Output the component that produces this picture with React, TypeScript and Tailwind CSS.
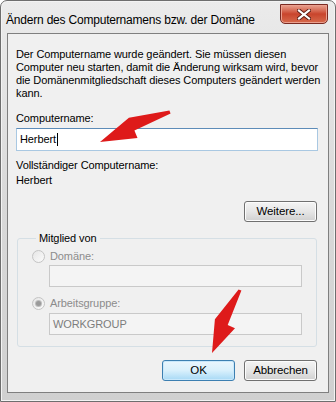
import React from 'react'

const font = { fontFamily: '"Liberation Sans", Arial, sans-serif' }

function Radio({ checked }: { checked?: boolean }) {
  return (
    <span className="relative flex h-[13px] w-[13px] shrink-0 items-center justify-center rounded-full border border-[#c4c4c4] bg-gradient-to-br from-[#e6e6e6] to-[#fbfbfb]">
      {checked && <span className="h-[5px] w-[5px] rounded-full bg-[#9a9a9a] ring-1 ring-[#bdbdbd]" />}
    </span>
  )
}

function Button({ label, primary }: { label: string; primary?: boolean }) {
  return (
    <button
      className={
        'flex h-[21px] w-[73px] items-center justify-center rounded-[3px] border text-[11.5px] tracking-[-0.1px] text-black ' +
        (primary
          ? 'border-[#3c7fb1] bg-gradient-to-b from-[#eaf6fd] via-[#d9f0fc] to-[#a7d9f5] shadow-[inset_0_0_0_1px_#c9e8fb]'
          : 'border-[#707070] bg-gradient-to-b from-[#f4f4f4] via-[#e6e6e6] to-[#d0d0d0] shadow-[inset_0_0_0_1px_#fcfcfc]')
      }
    >
      {label}
    </button>
  )
}

export default function App() {
  return (
    <div className="relative h-[402px] w-[336px] overflow-hidden bg-white" style={font}>
      {/* window frame */}
      <div className="flex h-[402px] w-[336px] flex-col rounded-t-[7px] border border-[#6e6e6e] bg-gradient-to-b from-[#ebebeb] via-[#d9d9d9] to-[#d0d0d0] shadow-[inset_0_0_0_1px_#f3f3f3]">
        {/* title bar */}
        <div className="flex h-[32px] shrink-0 items-start justify-between pl-[5px] pr-[7px]">
          <span className="mt-[11px] whitespace-nowrap text-[12px] leading-[16px] tracking-[-0.2px] text-black">
            Ändern des Computernamens bzw. der Domäne
          </span>
          <div className="mt-[3px] flex h-[20px] w-[48px] items-center justify-center rounded-b-[5px] border border-[#7a2a22] bg-gradient-to-b from-[#e8a291] via-[#c9442c] to-[#d66a4c] shadow-[inset_0_0_0_1px_#eba08f]">
            <svg width="14" height="11" viewBox="0 0 14 11">
              <path d="M2 1.5 L12 9.5 M12 1.5 L2 9.5" stroke="#5b1c14" strokeWidth="4" strokeLinecap="square" />
              <path d="M2 1.5 L12 9.5 M12 1.5 L2 9.5" stroke="#ffffff" strokeWidth="2.2" strokeLinecap="square" />
            </svg>
          </div>
        </div>

        {/* client area */}
        <div className="mx-[6px] mb-[8px] flex flex-1 flex-col border border-[#7f7f7f] bg-[#f0f0f0] pl-[8px] pr-[10px] pt-[14px] text-[11px] leading-[13px] tracking-[-0.1px] text-black">
          <p className="whitespace-nowrap">
            Der Computername wurde geändert. Sie müssen diesen
            <br />
            Computer neu starten, damit die Änderung wirksam wird, bevor
            <br />
            die Domänenmitgliedschaft dieses Computers geändert werden
            <br />
            kann.
          </p>

          <div className="mt-[12px]">Computername:</div>
          <div className="mt-[3px] flex h-[23px] items-center border border-[#a9c8e2] border-t-[#5d8cb8] bg-white pl-[3px]">
            Herbert<span className="ml-[1px] h-[13px] w-[1px] bg-black" />
          </div>

          <div className="mt-[8px]">Vollständiger Computername:</div>
          <div className="mt-[2px]">Herbert</div>

          <div className="mt-[14px] flex justify-end pr-[1px]">
            <Button label="Weitere..." />
          </div>

          <fieldset className="ml-[1px] mr-[1px] mt-[10px] rounded-[3px] border border-[#d5dfe5] pb-[11px] pl-[14px] pr-[14px]">
            <legend className="ml-[4px] px-[3px] leading-[13px]">Mitglied von</legend>
            <div className="mt-[5px] flex items-center gap-[5px] text-[#8c8c8c]">
              <Radio />
              <span>Domäne:</span>
            </div>
            <div className="ml-[17px] mt-[2px] h-[22px] border border-[#c9c9c9] bg-[#f4f4f4]" />
            <div className="mt-[10px] flex items-center gap-[5px] text-[#8c8c8c]">
              <Radio checked />
              <span>Arbeitsgruppe:</span>
            </div>
            <div className="ml-[17px] mt-[3px] flex h-[22px] items-center border border-[#c9c9c9] bg-[#f4f4f4] pl-[3px] text-[#7d7d7d]">
              WORKGROUP
            </div>
          </fieldset>

          <div className="mt-[13px] flex justify-end gap-[9px] pr-[1px]">
            <Button label="OK" primary />
            <Button label="Abbrechen" />
          </div>
        </div>
      </div>

      {/* red annotation arrows */}
      <svg className="pointer-events-none absolute left-0 top-0" width="336" height="402" viewBox="0 0 336 402">
        <polygon
          points="170.6,113.4 169.4,110.6 128.9,117.7 100,142 137.5,137.9 134.4,130.6"
          fill="#de1a1a"
        />
        <polygon
          points="241.4,290.6 238.6,289.4 214.9,319.3 212,353 235,328.3 227.7,325.0"
          fill="#de1a1a"
        />
      </svg>
    </div>
  )
}
